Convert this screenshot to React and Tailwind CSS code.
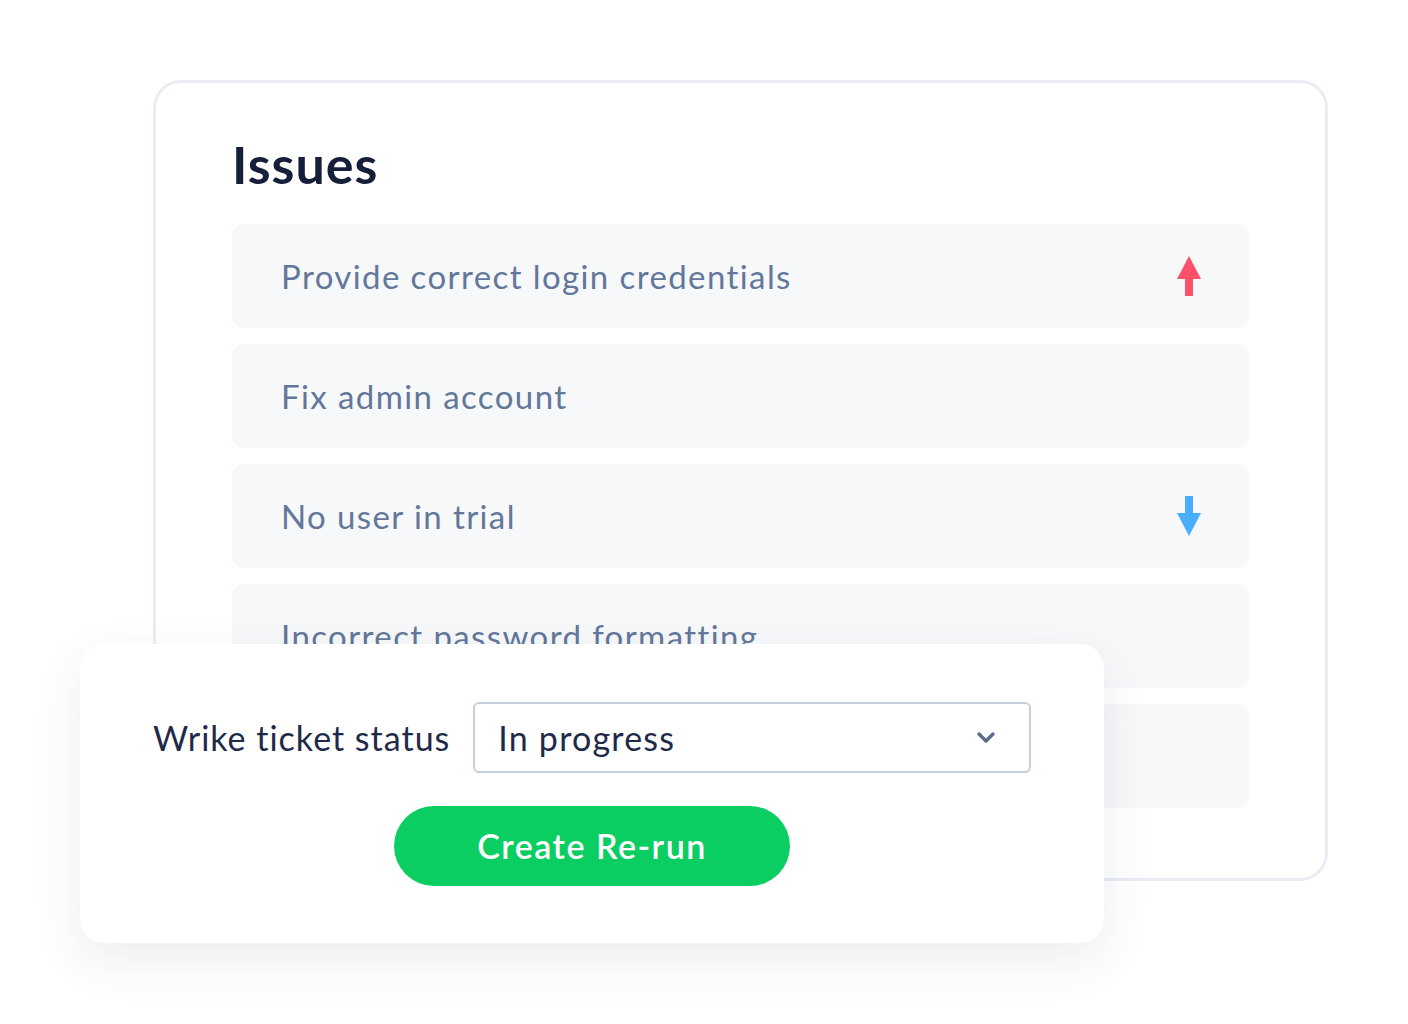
import React from 'react';

const issues = [
  { id: 1, title: 'Provide correct login credentials', trend: 'up' },
  { id: 2, title: 'Fix admin account' },
  { id: 3, title: 'No user in trial', trend: 'down' },
  { id: 4, title: 'Incorrect password formatting' },
  { id: 5, title: '' },
];

function TrendArrow({ dir }) {
  const up = dir === 'up';
  return (
    <svg width="24" height="40" viewBox="0 0 24 40" className={up ? 'text-[#ff5069]' : 'text-[#48aeff]'}>
      {up ? (
        <>
          <polygon points="12,0 24,23 0,23" fill="currentColor" />
          <rect x="8" y="23" width="8" height="17" fill="currentColor" />
        </>
      ) : (
        <>
          <rect x="8" y="0" width="8" height="17" fill="currentColor" />
          <polygon points="0,17 24,17 12,40" fill="currentColor" />
        </>
      )}
    </svg>
  );
}

function IssueRow({ title, trend }) {
  return (
    <div className="h-[104px] rounded-xl bg-[#f7f8fa] flex items-center justify-between pl-[49px] pr-[48px]">
      <span className="text-[33px] tracking-[1.4px] text-[#62779a] leading-none">{title}</span>
      {trend && <TrendArrow dir={trend} />}
    </div>
  );
}

export default function App() {
  return (
    <div className="relative w-[1408px] h-[1024px] bg-white overflow-hidden font-['Lato',sans-serif]">
      {/* Issues card */}
      <div className="ml-[153px] mt-[80px] w-[1175px] border-[3px] border-[#e9ecf3] rounded-[28px] bg-white px-[76px] pt-[55px] pb-[70px]">
        <h1 className="text-[52px] tracking-[1px] leading-none font-bold text-[#161f3a] mb-[34px]">Issues</h1>
        <div className="flex flex-col gap-4">
          {issues.map(issue => (
            <IssueRow key={issue.id} {...issue} />
          ))}
        </div>
      </div>

      {/* Status popover */}
      <div className="absolute left-[80px] top-[644px] w-[1024px] bg-white rounded-[24px] shadow-[0_18px_50px_rgba(35,50,80,0.09)] px-[73px] pt-[58px] pb-[57px] flex flex-col items-center gap-[33px]">
        <div className="flex items-center gap-[23px] w-full">
          <span className="text-[34px] tracking-[1px] text-[#1f2a4a] whitespace-nowrap leading-none">Wrike ticket status</span>
          <div className="flex-1 h-[71px] border-2 border-[#c6cddb] rounded-md flex items-center justify-between pl-[23px] pr-[32px]">
            <span className="text-[34px] tracking-[1.2px] text-[#1f2a4a] leading-none">In progress</span>
            <svg width="22" height="14" viewBox="0 0 22 14" fill="none">
              <path d="M4 3l7 7 7-7" stroke="#5b6b8a" strokeWidth="3.4" strokeLinecap="round" strokeLinejoin="round" />
            </svg>
          </div>
        </div>
        <button className="w-[396px] h-[80px] rounded-full bg-[#0bce63] text-white text-[34px] tracking-[1.5px] font-semibold leading-none">
          Create Re-run
        </button>
      </div>
    </div>
  );
}
